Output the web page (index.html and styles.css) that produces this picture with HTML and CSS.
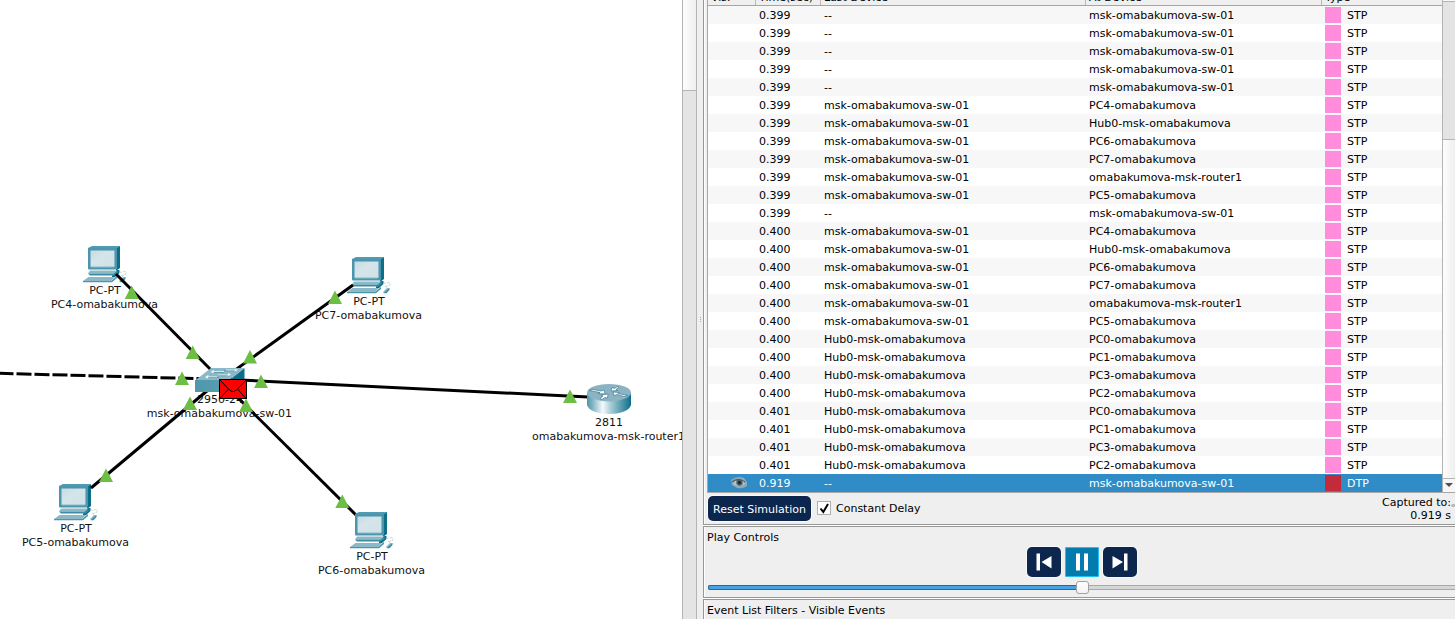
FILE: index.html
```html
<!DOCTYPE html>
<html lang="en">
<head>
<meta charset="utf-8">
<title>Network Simulation</title>
<link rel="stylesheet" href="styles.css">
</head>
<body>
<div class="app">
  <svg class="topology" width="682" height="619" viewBox="0 0 682 619">
    <defs>
      <linearGradient id="routerSide" x1="0" x2="1" y1="0" y2="0">
        <stop offset="0" stop-color="#4f97ab"/><stop offset=".12" stop-color="#7fb2c1"/><stop offset=".36" stop-color="#f4fafb"/><stop offset=".55" stop-color="#a3cad4"/><stop offset="1" stop-color="#0c6e88"/>
      </linearGradient>
      <linearGradient id="switchFront" x1="0" x2="1" y1="0" y2="0">
        <stop offset="0" stop-color="#4f97ab"/><stop offset="1" stop-color="#5a9fb3"/>
      </linearGradient>
      <linearGradient id="screen" x1="0" x2="1" y1="0" y2="1">
        <stop offset="0" stop-color="#c5dbe2"/><stop offset=".4" stop-color="#d5e5ea"/><stop offset="1" stop-color="#cfe1e7"/>
      </linearGradient>
      <g id="pc">
        <path fill="#0c6e88" d="M33 2 37 0V22L33 25Z"/>
        <path fill="#4f9bb1" d="M5 2 9 0H37L33 3H5Z"/>
        <path fill="#0c6e88" d="M29 29.500 34 24H36.500V27L32 31H29Z"/>
        <rect fill="#4b96ac" x="5" y="2" width="29" height="21.500" rx="1"/>
        <rect fill="url(#screen)" stroke="#8bb9c8" x="7.500" y="4.500" width="24" height="16.500" rx="1"/>
        <path fill="#8bb9c8" d="M7 24.500H34.500L30.500 27.500H5Z"/>
        <path fill="#3e8ca4" d="M5 27.500H31L34.500 24.500V27L31 29.500H7Z"/>
        <path fill="#8bb9c8" d="M5.500 31H32L28 35H0Z"/>
        <path fill="#4b96ac" d="M0 35H28L34 30V32L29 36.300H0Z"/>
        <path fill="none" stroke="#b4cfd8" stroke-width=".8" stroke-dasharray="3 1" d="M36 26.500 42 25.500 43.500 26.500 42 29 38 29.500 40 31"/>
        <path fill="#8bb9c8" d="M36.500 34.500 40 31H42.500L41.500 33.500 39 36H36.500Z"/>
        <path fill="#3e8ca4" d="M38.500 34.500 42.500 31V33L39.500 36.300H36.500Z"/>
      </g>
      <path id="up" fill="#6cbe45" d="M0 0 7 13.500H-7Z"/>
    </defs>

    <use href="#pc" x="83" y="246"/>
    <use href="#pc" x="347" y="257"/>
    <use href="#pc" x="54" y="484"/>
    <g class="label">
      <text x="105" y="294">PC-PT</text><text x="104.500" y="308">PC4-omabakumova</text>
      <text x="369" y="305">PC-PT</text><text x="368.500" y="319">PC7-omabakumova</text>
      <text x="76" y="532">PC-PT</text><text x="75.500" y="546">PC5-omabakumova</text>
      <text x="372" y="560">PC-PT</text><text x="371.500" y="574">PC6-omabakumova</text>
      <text x="220" y="403">2950-24</text><text x="219.500" y="417">msk-omabakumova-sw-01</text>
      <text x="609" y="426">2811</text><text x="608.500" y="440">omabakumova-msk-router1</text>
    </g>
    <g class="cable">
      <path d="M116 274 220 379"/>
      <path d="M353 285 220 381"/>
      <path d="M91 488 220 380"/>
      <path d="M357 516 220 380"/>
      <path d="M230 379.500 588 397"/>
      <path class="dashed" d="M0 373.300 200 378.700"/>
    </g>
    <use href="#pc" x="350" y="512"/>

    <g>
      <path fill="#8bb9c8" d="M195 380.500 211 368H244L229 380.500Z"/>
      <path fill="#0c6e88" d="M229 380.500 244.500 368V380L229 391.500Z"/>
      <rect fill="url(#switchFront)" x="195" y="380" width="34" height="12"/>
      <g fill="none" stroke="#4b8ea3" stroke-width=".8">
        <path d="M214 372.300H224M224 370.800H236M208 377.600H219M218 375.700H229"/>
      </g>
      <g fill="none" stroke="#eef5f7" stroke-width=".8">
        <path d="M214 371.500H224M226 370H236M208 376.800H217M218 374.900H229"/>
      </g>
      <path fill="#fff" d="M210.500 372 214 370 213.500 373ZM238 370 235 369 234.500 371.500ZM205 377 208.500 375 208 378.500ZM231 374.700 228.500 373 227.500 376Z"/>
    </g>

    <g>
      <path fill="url(#routerSide)" d="M587 393V405C590 417 628 417 631 405V393Z"/>
      <ellipse fill="#8bb3c4" cx="609" cy="392.700" rx="22" ry="8.700"/>
      <g fill="#fff" stroke="#276f86" stroke-width=".6">
        <path d="M589.500 390.500 593 389.500 601 391 604 390 605 394 598 393.500 600 392.500Z"/>
        <path d="M611 391 612 387.500 614.500 388.500 618 386 619 387 616 389.500 617.500 390.500Z"/>
        <path d="M628 395.500 624 396.500 617 394.500 614 395.500 613 392 619 392.500 618 393.500Z"/>
        <path d="M608 394 607.500 398 605 397.500 602 399.500 600 398.500 603 396 601 395Z"/>
      </g>
    </g>

    <use href="#up" x="131.700" y="285.500"/><use href="#up" x="192.700" y="345.500"/>
    <use href="#up" x="335" y="290.500"/><use href="#up" x="250" y="350"/>
    <use href="#up" x="182" y="371.500"/><use href="#up" x="261" y="374.500"/>
    <use href="#up" x="570" y="389.500"/><use href="#up" x="190" y="396.500"/>
    <use href="#up" x="106" y="468.500"/><use href="#up" x="246" y="398.500"/>
    <use href="#up" x="342.300" y="494.500"/>

    <g stroke="#000" fill="none">
      <rect x="219.500" y="379.500" width="27" height="19" fill="#f00"/>
      <path d="M220 380 229 389.500 232 391.500H234L237 389.500 246 380M220 398.500 228.500 389M246 398.500 237.500 389"/>
    </g>
  </svg>

  <div class="canvas-scroll"><div class="canvas-thumb"></div></div>
  <div class="splitter"><i></i><i></i><i></i></div>

  <main class="panel">
    <section class="events">
      <div class="list">
        <div class="table">
          <div class="head"><span>Vis.</span><span>Time(sec)</span><span>Last Device</span><span>At Device</span><span>Type</span></div>
          <div id="rows"></div>
        </div>
        <div class="list-scroll"><div class="list-thumb"></div><div class="list-track"></div><div class="down"></div></div>
      </div>
      <div class="actions">
        <button class="reset">Reset Simulation</button>
        <span class="check"><svg width="13" height="13" viewBox="0 0 13 13"><path d="M2.500 6.500 5.300 10 10 2" fill="none" stroke="#000" stroke-width="2"/></svg></span>
        <label>Constant Delay</label>
        <div class="captured">Captured to:<br>0.919 s</div>
        <i class="grip"></i>
      </div>
    </section>
    <section class="play">
      <div class="title">Play Controls</div>
      <div class="buttons">
        <span class="btn"><svg width="34" height="30"><path fill="#fff" d="M9.500 6.500h3.500v17H9.500ZM14.500 15 24.500 9V21.500Z"/></svg></span>
        <span class="btn active"><svg width="34" height="30"><path fill="#fff" d="M11 6.500h4v17H11ZM19 6.500h4v17H19Z"/></svg></span>
        <span class="btn"><svg width="34" height="30"><path fill="#fff" d="M21 6.500h3.500v17H21ZM20 15 9.500 9V21.500Z"/></svg></span>
      </div>
      <div class="slider"><div class="fill"></div><div class="knob"></div><div class="rest"></div></div>
    </section>
    <section class="filters">Event List Filters - Visible Events</section>
  </main>
</div>
<script src="script.js"></script>
</body>
</html>
```
FILE: styles.css
```css
* { box-sizing: border-box; }
body { margin: 0; background: #efefef; color: #000; font: 11px/13px "DejaVu Sans", sans-serif; overflow: hidden; }
.app { display: flex; width: 1455px; height: 619px; }
.topology { flex: none; display: block; background: #fff; }
.label { text-anchor: middle; fill: #111; }
.cable { stroke: #000; stroke-width: 3; fill: none; }
.dashed { stroke-dasharray: 15 3; stroke-dashoffset: 1.5; }

.canvas-scroll { flex: none; width: 15px; border: solid #b4b4b4; border-width: 0 1px; background: #e4e4e4; }
.canvas-thumb { height: 91px; border-bottom: 1px solid #b4b4b4; background: linear-gradient(90deg, #fdfdfd, #efefef); }
.splitter { flex: none; width: 6px; display: flex; flex-direction: column; align-items: center; justify-content: center; gap: 1px; padding-top: 20px; }
.splitter i { width: 1px; height: 1px; background: #aaa; }

.panel { flex: 1; min-width: 0; display: flex; flex-direction: column; gap: 1px; background: #fff; }
.panel section { border-left: 1px solid #979797; background: #efefef; box-shadow: inset 1px 0 #fff; }
.events { height: 525px; border-bottom: 1px solid #979797; padding-left: 3px; }
.list { display: flex; height: 493px; border-left: 1px solid #a8a8a8; border-bottom: 1px solid #a8a8a8; }
.table { width: 734px; }
.head { height: 6px; display: grid; grid-template-columns: 48px 65px 265px 236px 120px; overflow: hidden; border-bottom: 1px solid #a5a5a5; background: #efefef; }
.head span { margin-top: -9px; height: 14px; padding-left: 3px; border-right: 1px solid #b8b8b8; }
.head span:last-child { border-right: 0; }
.row { display: grid; grid-template-columns: 51px 65px 265px 236px 16px 1fr; grid-template-rows: 18px; height: 18px; line-height: 20px; background: #fff; }
.row:nth-child(odd) { background: #f7f7f7; }
.swatch { margin: 1px 0; background: #ff8ddc; }
.type { padding-left: 6px; }
.row.selected { background: #308cc6; color: #fff; }
.selected .swatch { background: #c32b3b; }
.eye { display: block; margin: 2px 0 0 22px; }

.list-scroll { flex: 1; display: flex; flex-direction: column; border-left: 1px solid #b4b4b4; background: #e4e4e4; }
.list-thumb { height: 140px; border: solid #b4b4b4; border-width: 0 0 1px; background: linear-gradient(#fafafa 1px, #b4b4b4 1px 2px, #e4e4e4 2px); }
.list-track { flex: 1; background: linear-gradient(90deg, #fdfdfd, #efefef); }
.down { height: 14px; border-top: 1px solid #b4b4b4; background: #f7f7f7; }
.down::before { content: ""; display: block; width: 0; margin: 4px 0 0 2px; border: 4px solid transparent; border-top-color: #505050; border-bottom: 0; }

.actions { display: flex; align-items: flex-start; padding-top: 3px; height: 31px; }
.reset { width: 103px; height: 25px; margin-left: 1px; padding: 1px 0 0; border: 0; border-radius: 5px; background: #0c264d; color: #fff; font: inherit; white-space: nowrap; box-shadow: 0 0 0 1px #f9f9f9; }
.check { width: 14px; height: 14px; margin: 5px 0 0 6px; background: #fff; border: 1px solid #b0b0b0; }
.check svg { display: block; }
.actions label { margin: 6px 0 0 5px; }
.captured { margin-left: auto; text-align: right; }
.grip { width: 4px; height: 3px; margin: 8px 0 0; border-radius: 2px 0 0 2px; background: #bbb; }

.play { height: 72px; border-top: 1px solid #979797; border-bottom: 1px solid #979797; padding-left: 3px; }
.title { height: 20px; padding-top: 4px; }
.buttons { display: flex; gap: 4px; padding-left: 320px; height: 30px; }
.btn { width: 34px; height: 30px; border-radius: 5px; background: #0c264d; box-shadow: 0 0 0 1px #f9f9f9; }
.btn svg { display: block; }
.btn.active { background: #047bad; border-radius: 2px; box-shadow: inset 0 0 0 1px #1cc2f2; }
.slider { display: flex; align-items: center; height: 13px; margin: 4px 0 0 1px; }
.fill { width: 368px; height: 5px; border: 1px solid #25689a; border-right: 0; border-radius: 2px 0 0 2px; background: #46a2e0; }
.knob { width: 13px; height: 13px; border: 1px solid #a2a2a2; border-radius: 3px; background: linear-gradient(#fff, #f3f3f3); }
.rest { flex: 1; height: 5px; border: solid #a9a9a9; border-width: 1px 0; background: #d6d6d6; }
.filters { flex: 1; border-top: 1px solid #979797; padding: 4px 0 0 3px; }
```
FILE: script.js
```js
const sw = 'msk-omabakumova-sw-01';
const hub = 'Hub0-msk-omabakumova';
const neighbours = ['PC4-omabakumova', hub, 'PC6-omabakumova', 'PC7-omabakumova', 'omabakumova-msk-router1', 'PC5-omabakumova'];
const hubPorts = ['PC0-omabakumova', 'PC1-omabakumova', 'PC3-omabakumova', 'PC2-omabakumova'];

const events = [
  ...Array(5).fill(['0.399', '--', sw]),
  ...neighbours.map(n => ['0.399', sw, n]),
  ['0.399', '--', sw],
  ...neighbours.map(n => ['0.400', sw, n]),
  ...hubPorts.map(n => ['0.400', hub, n]),
  ...hubPorts.map(n => ['0.401', hub, n]),
  ['0.919', '--', sw, 'DTP']
];

const eye = '<svg class="eye" width="18" height="14" viewBox="0 0 18 14"><path d="M1 4Q7 -1 14 2L17 6V10Q13 13 7 12L2 9Z" fill="#8fa9b6"/><path d="M2 6Q8 1 15 6" fill="none" stroke="#53636b" stroke-width="1.500"/><path d="M3 8Q9 12 15 8L13 5H5Z" fill="#b5c4cb"/><circle cx="9.500" cy="6.500" r="3.200" fill="#4d6069"/><circle cx="9.500" cy="6.500" r="1.500" fill="#182126"/></svg>';

document.getElementById('rows').innerHTML = events.map(([time, last, at, type]) =>
  `<div class="row${type ? ' selected' : ''}"><span>${type ? eye : ''}</span><span>${time}</span><span>${last}</span><span>${at}</span><span class="swatch"></span><span class="type">${type || 'STP'}</span></div>`
).join('');
```
